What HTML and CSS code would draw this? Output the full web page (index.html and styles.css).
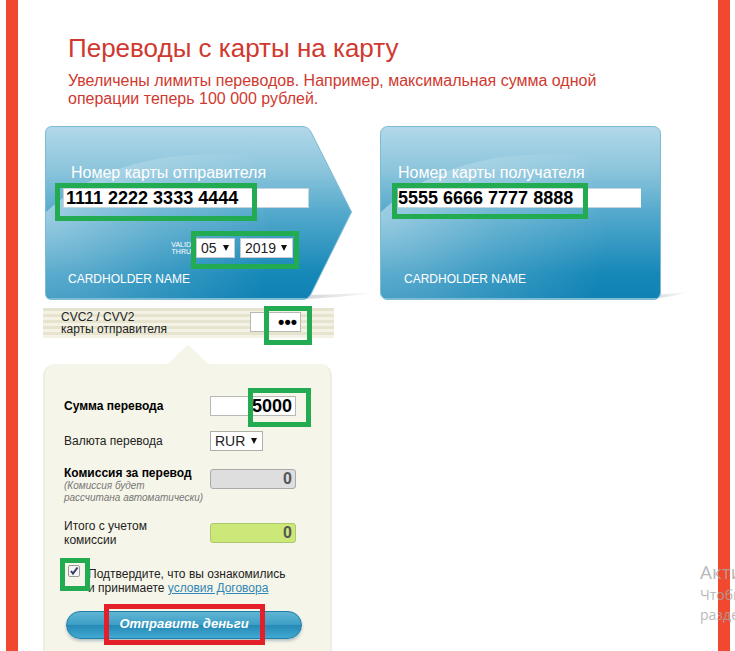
FILE: index.html
```html
<!DOCTYPE html>
<html lang="ru">
<head>
<meta charset="utf-8">
<title>Переводы с карты на карту</title>
<link rel="stylesheet" href="styles.css">
</head>
<body>
<main class="page">
  <header class="intro">
    <h1>Переводы с карты на карту</h1>
    <p>Увеличены лимиты переводов. Например, максимальная сумма одной операции теперь 100 000 рублей.</p>
  </header>
  <form class="transfer">
    <div class="cards">
      <section class="card card-from">
        <svg class="card-art" viewBox="0 0 350 180" aria-hidden="true">
          <defs>
            <linearGradient id="blue" x1="0" y1="0" x2="0" y2="1">
              <stop offset="0" stop-color="#b2d8ea"/><stop offset=".25" stop-color="#8cc5dc"/>
              <stop offset=".5" stop-color="#54a9cc"/><stop offset=".85" stop-color="#1688b8"/><stop offset="1" stop-color="#0f82b4"/>
            </linearGradient>
            <radialGradient id="shine" gradientUnits="userSpaceOnUse" cx="0" cy="90" r="230">
              <stop offset="0" stop-color="#fff" stop-opacity=".42"/><stop offset=".5" stop-color="#fff" stop-opacity=".17"/><stop offset="1" stop-color="#fff" stop-opacity="0"/>
            </radialGradient>
            <linearGradient id="shade" x1="0" y1="0" x2="1" y2="0">
              <stop offset="0" stop-color="#8c979c" stop-opacity=".4"/><stop offset="1" stop-color="#8c979c" stop-opacity="0"/>
            </linearGradient>
          </defs>
          <path d="M258 173Q305 171 335 166Q310 168 262 169Z" fill="url(#shade)"/>
          <path d="M7 .5H257Q263 .5 266 6L306.500 86L266 168Q263 173.500 257 173.500H7Q.5 173.500 .5 167V7Q.5 .5 7 .5Z" fill="url(#blue)" stroke="#7dbbd3"/>
          <path d="M1 86C40 50 100 22 205 29L240 173H7Q1 173 1 167Z" fill="url(#shine)"/>
          <path d="M5 172.500H260" stroke="#7dbad3" fill="none"/>
        </svg>
        <label class="card-label" for="from">Номер карты отправителя</label>
        <div class="number">
          <input id="from" type="text" value="1111 2222 3333 4444">
          <span class="mark mark-from"></span>
        </div>
        <div class="valid">
          <span class="valid-text">VALID<br>THRU</span>
          <span class="select"><select aria-label="Месяц"><option>05</option></select></span>
          <span class="select select-year"><select aria-label="Год"><option>2019</option></select></span>
          <span class="mark mark-valid"></span>
        </div>
        <div class="holder">CARDHOLDER NAME</div>
      </section>
      <section class="card card-to">
        <svg class="card-art" viewBox="0 0 350 180" aria-hidden="true">
          <path d="M270 173Q295 171 308 166Q290 168 270 169Z" fill="url(#shade)"/>
          <rect x=".5" y=".5" width="280" height="173" rx="7" fill="url(#blue)" stroke="#7dbbd3"/>
          <path d="M1 86C40 50 100 22 205 29L240 173H7Q1 173 1 167Z" fill="url(#shine)"/>
          <path d="M5 172.500H276" stroke="#7dbad3" fill="none"/>
        </svg>
        <label class="card-label" for="to">Номер карты получателя</label>
        <div class="number">
          <input id="to" type="text" value="5555 6666 7777 8888">
          <span class="mark mark-to"></span>
        </div>
        <div class="holder">CARDHOLDER NAME</div>
      </section>
    </div>

    <div class="cvc">
      <label for="cvc">CVC2 / CVV2<br>карты отправителя</label>
      <div class="field">
        <input id="cvc" type="text" value="•••">
        <span class="mark mark-cvc"></span>
      </div>
    </div>

    <section class="panel">
      <svg class="notch" viewBox="0 0 50 20" aria-hidden="true"><path d="M0 20Q5 19 9 15L22 2Q25-1 28 2L41 15Q45 19 50 20Z" fill="#f6f5e9"/></svg>
      <div class="row row-sum">
        <label class="strong" for="sum">Сумма перевода</label>
        <div class="field"><input id="sum" type="text" value="5000"><span class="mark mark-sum"></span></div>
      </div>
      <div class="row row-currency">
        <label for="currency">Валюта перевода</label>
        <span class="select select-currency"><select id="currency"><option>RUR</option></select></span>
      </div>
      <div class="row row-fee">
        <label for="fee"><b>Комиссия за перевод</b><small>(Комиссия будет<br>рассчитана автоматически)</small></label>
        <div class="field"><input class="result" id="fee" type="text" value="0" readonly></div>
      </div>
      <div class="row row-total">
        <label for="total">Итого с учетом<br>комиссии</label>
        <div class="field"><input class="result total" id="total" type="text" value="0" readonly></div>
      </div>
      <div class="agree">
        <span class="tick"><input id="agree" type="checkbox" checked><svg viewBox="0 0 12 12" aria-hidden="true"><path d="M3 6L5 8.500L9.500 2.500" fill="none" stroke="#333c63" stroke-width="2"/></svg></span>
        <label for="agree">Подтвердите, что вы ознакомились<br>и принимаете <a href="#terms">условия Договора</a></label>
        <span class="mark mark-agree"></span>
      </div>
      <div class="send">
        <button type="button">Отправить деньги</button>
        <span class="mark mark-send"></span>
      </div>
    </section>
  </form>
</main>
<aside class="notice"><strong>Активация</strong><span>Чтобы</span><span>разделе</span></aside>
</body>
</html>
```
FILE: styles.css
```css
* { box-sizing: border-box; }
html, body { margin: 0; height: 100%; }
body {
  position: relative;
  overflow: hidden;
  background: #fff;
  color: #222;
  font: 12px/14px "Liberation Sans", Arial, sans-serif;
}
.page {
  min-height: 100%;
  margin: 0 5px 0 6px;
  padding: 33px 24px 0 25px;
  border: solid #f0492f;
  border-width: 0 12px;
}
.intro { max-width: 600px; padding-left: 25px; color: #d0392f; }
.intro h1 { margin: 0 0 9px; font-size: 26px; line-height: 30px; font-weight: 400; }
.intro p { margin: 0; font-size: 16px; line-height: 18px; }
input, select, button { font-family: inherit; margin: 0; }
.mark { position: absolute; border: 5px solid #22ab50; pointer-events: none; }

.cards { display: flex; gap: 28px; margin: 18px 0 0 2px; }
.card { position: relative; height: 174px; padding: 37px 20px 0 18px; color: #fff; }
.card-from { width: 307px; padding-right: 43px; }
.card-to { width: 281px; }
.card-art { position: absolute; top: 0; left: 0; width: 350px; height: 180px; }
.card > :not(svg) { position: relative; }
.card-label { display: block; padding-left: 8px; font-size: 16px; line-height: 20px; }
.card-to .card-label { padding-left: 0; }
.number { margin-top: 5px; }
.number input {
  display: block; width: 100%; height: 20px; padding: 0 2px;
  border: 1px solid #c4d5dc; background: #fff; color: #000;
  font-size: 18px; line-height: 18px; font-weight: 700;
}
.card-to .number input { padding: 0; border-width: 1px 0; }
.mark-from { top: -5px; left: -8px; width: 202px; height: 38px; }
.mark-to { top: -5px; left: -6px; width: 196px; height: 36px; }
.valid { display: flex; align-items: center; justify-content: flex-end; gap: 5px; margin: 30px 16px 0 0; }
.valid-text { font-size: 7px; line-height: 7px; text-align: right; }
.select { position: relative; display: block; width: 39px; height: 20px; }
.select select {
  appearance: none; display: block; width: 100%; height: 100%; padding: 0 4px;
  border: 1px solid #c5cdd0; border-radius: 0; background: #fff; color: #222; font-size: 14px;
}
.select::after {
  content: ""; position: absolute; top: 7px; right: 6px;
  border: solid transparent; border-width: 6px 3px 0; border-top-color: #111; pointer-events: none;
}
.select-year { width: 53px; }
.mark-valid { top: -7px; right: -6px; width: 108px; height: 38px; }
.holder { margin: 14px 0 0 5px; font-size: 12px; line-height: 14px; }
.card-to .holder { margin: 64px 0 0 6px; }

.cvc {
  display: flex; justify-content: space-between; width: 291px; height: 30px;
  margin-top: 8px; padding: 3px 33px 0 18px; line-height: 12px;
  background: repeating-linear-gradient(#e6e4cf 0 3px, #f3f2e5 3px 6px);
}
.field { position: relative; }
.field input {
  display: block; width: 86px; height: 20px; padding: 0 3px;
  border: 1px solid #b9b9b3; background: #fff; color: #000;
  font-size: 18px; font-weight: 700; text-align: right;
}
.cvc .field { margin-top: 1px; }
.cvc .field input { width: 51px; }
.mark-cvc { top: -6px; right: -11px; width: 48px; height: 39px; }

.panel {
  position: relative; width: 289px; min-height: 300px; margin-top: 26px; padding: 32px 28px 0 19px;
  border: solid #efeee3; border-width: 0 2px; border-radius: 12px 12px 0 0; background: #f6f5e9;
}
.notch { position: absolute; top: -19px; left: 118px; width: 50px; height: 20px; }
.row { display: grid; grid-template-columns: 146px 86px; align-items: start; }
.row label { line-height: 14px; }
.row small { display: block; color: #777; font-size: 10px; line-height: 12px; font-style: italic; white-space: nowrap; }
.row-sum, .row-currency { align-items: center; }
.strong { color: #000; font-weight: 700; }
.row b { color: #000; }
.row-currency { margin-top: 15px; }
.select-currency { width: 53px; }
.select-currency select { border-color: #b0b0aa; }
.row-fee { margin-top: 15px; }
.row-fee .field { margin-top: 3px; }
.row-total { margin-top: 15px; }
.row-total .field { margin-top: 4px; }
.field .result { border-color: #aaa; border-radius: 3px; background: #dedede; color: #555; font-size: 16px; }
.field .total { border-color: #aac96b; background: #cbe878; }
.mark-sum { top: -8px; right: -15px; width: 63px; height: 39px; }
.agree { position: relative; display: flex; gap: 8px; margin-top: 20px; }
.tick { position: relative; width: 12px; height: 12px; margin: -2px 0 0 4px; }
.tick input { appearance: none; display: block; width: 12px; height: 12px; margin: 0; border: 1px solid #999; border-radius: 2px; background: #f5f5f5; }
.tick svg { position: absolute; top: 0; left: 0; width: 12px; height: 12px; pointer-events: none; }
.agree a { color: #3187b5; }
.mark-agree { top: -9px; left: -4px; width: 30px; height: 33px; }
.send { position: relative; margin: 16px 0 0 2px; width: 236px; }
.send button {
  display: block; width: 100%; height: 28px; padding: 0 0 3px; border: 1px solid #1f7fa6; border-radius: 14px;
  background: linear-gradient(#60b5d3, #3e9fc6 48%, #2689b6 52%, #42a9d2);
  box-shadow: 0 2px 3px #b5c3c5; color: #fff; font-size: 13px; line-height: 16px; font-weight: 700; font-style: italic;
}
.mark-send { top: -7px; left: 38px; width: 161px; height: 41px; border-color: #e3202a; }
.notice {
  position: absolute; top: 561px; left: 700px; right: 0; overflow: hidden;
  color: #a8a8a8; font: 14px/20px "Open Sans", sans-serif; white-space: nowrap; opacity: .8;
}
.notice strong, .notice span { display: block; }
.notice strong { margin-bottom: 2px; font-size: 19px; line-height: 22px; font-weight: 400; }
```
